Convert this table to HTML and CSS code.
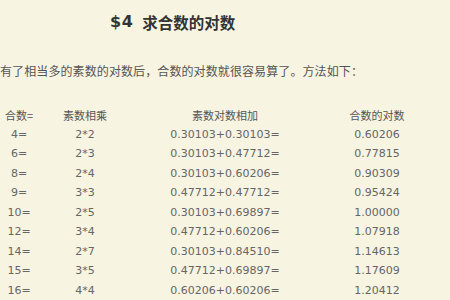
FILE: index.html
```html
<!DOCTYPE html>
<html lang="zh">
<head>
<meta charset="utf-8">
<link rel="stylesheet" href="styles.css">
</head>
<body>
<div class="page">
  <h2 class="title"><span class="num">$4</span><span class="name">求合数的对数</span></h2>
  <p class="intro">有了相当多的素数的对数后，合数的对数就很容易算了。方法如下：</p>
  <div class="table">
    <div class="row head"><span>合数=</span><span>素数相乘</span><span>素数对数相加</span><span>合数的对数</span></div>
    <div class="row"><span>4=</span><span>2*2</span><span>0.30103+0.30103=</span><span>0.60206</span></div>
    <div class="row"><span>6=</span><span>2*3</span><span>0.30103+0.47712=</span><span>0.77815</span></div>
    <div class="row"><span>8=</span><span>2*4</span><span>0.30103+0.60206=</span><span>0.90309</span></div>
    <div class="row"><span>9=</span><span>3*3</span><span>0.47712+0.47712=</span><span>0.95424</span></div>
    <div class="row"><span>10=</span><span>2*5</span><span>0.30103+0.69897=</span><span>1.00000</span></div>
    <div class="row"><span>12=</span><span>3*4</span><span>0.47712+0.60206=</span><span>1.07918</span></div>
    <div class="row"><span>14=</span><span>2*7</span><span>0.30103+0.84510=</span><span>1.14613</span></div>
    <div class="row"><span>15=</span><span>3*5</span><span>0.47712+0.69897=</span><span>1.17609</span></div>
    <div class="row"><span>16=</span><span>4*4</span><span>0.60206+0.60206=</span><span>1.20412</span></div>
  </div>
</div>
</body>
</html>
```

FILE: styles.css
```css
html, body {
  margin: 0;
  padding: 0;
  background: #f7f4e2;
}
.page {
  width: 450px;
  height: 300px;
  overflow: hidden;
  font-family: "DejaVu Sans", "Noto Sans CJK SC", sans-serif;
  color: #666;
}
.title {
  margin: 0;
  padding: 11px 0 0 110px;
  font-size: 16px;
  line-height: 22px;
  font-weight: bold;
  color: #333;
  display: flex;
  gap: 9px;
}
.title .num {
  letter-spacing: 0.5px;
}
.title .name {
  font-family: "Noto Sans CJK SC", sans-serif;
  font-size: 15.5px;
}
.intro {
  margin: 0;
  padding: 29px 0 0 0;
  font-family: "Noto Sans CJK SC", sans-serif;
  font-size: 12px;
  letter-spacing: 0.1px;
  line-height: 18px;
  color: #555;
}
.table {
  margin-top: 26px;
  font-size: 11px;
}
.row {
  display: grid;
  grid-template-columns: 38px 94px 186px 118px;
  height: 19.5px;
  line-height: 19.5px;
  text-align: center;
}
.row.head {
  height: 18.5px;
  line-height: 18.5px;
  font-family: "Noto Sans CJK SC", sans-serif;
  color: #555;
}
```
